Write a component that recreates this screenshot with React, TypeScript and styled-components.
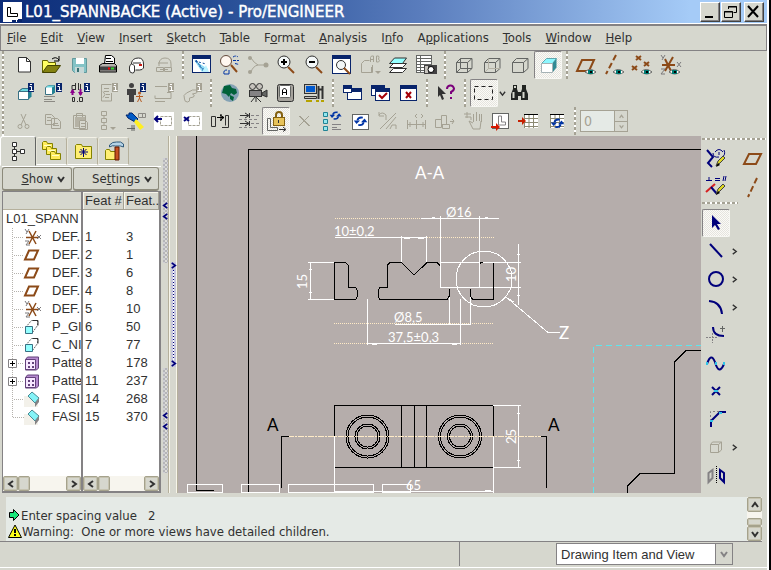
import React from "react";
import styled, { createGlobalStyle, css } from "styled-components";

const ui = '"DejaVu Sans Condensed", "DejaVu Sans", "Noto Sans", sans-serif';
const arial = '"Liberation Sans", Arial, sans-serif';
const cad = 'Lato, "Open Sans", sans-serif';
const face = "#d6d7ce";
const navy = "#00007b";
const brown = "#8c4a18";
const dis = "#a5a294";

const Global = createGlobalStyle`
  * { box-sizing: border-box; }
  html, body, #root { height: 100%; }
  body { margin: 0; background: #000; font-family: ${ui}; font-size: 13px; color: #313131; overflow: hidden; }
  button { font: inherit; color: inherit; background: none; border: 0; padding: 0; margin: 0; }
  svg { display: block; flex: none; }
`;

const Window = styled.div`
  display: flex;
  flex-direction: column;
  height: 100vh;
  margin-right: 2px;
  background: ${face};
  border-right: 2px solid #fff;
`;

/* ---------- title and menu ---------- */
const TitleBar = styled.header`
  display: flex;
  align-items: center;
  flex: none;
  height: 24px;
  padding: 0 3px 0 3px;
  background: linear-gradient(90deg, #0c2c78 0%, #1f4790 25%, #5a7dbd 55%, #a5cbf7 90%);
  color: #fff;
`;
const Title = styled.h1`
  flex: 1;
  margin: 0 0 0 3px;
  font: 400 15px/24px "DejaVu Sans", sans-serif;
  white-space: nowrap;
  -webkit-text-stroke: 0.4px #fff;
`;
const CaptionButton = styled.button<{ $gap?: boolean }>`
  width: 20px;
  height: 20px;
  margin-left: ${(p) => (p.$gap ? "3px" : "1px")};
  background: ${face};
  border: 1px solid;
  border-color: #fff #424242 #424242 #fff;
  box-shadow: inset -1px -1px #848284;
`;
const MenuBar = styled.nav`
  display: flex;
  align-items: center;
  flex: none;
  gap: 14px;
  height: 27px;
  padding: 0 6px;
  border: 1px solid #848284;
  border-top: 2px solid #848284;
  box-shadow: 0 -1px #fff;
`;
const MenuItem = styled.button`
  line-height: 20px;
  white-space: nowrap;
`;

/* ---------- toolbars ---------- */
const Toolbars = styled.div`
  display: flex;
  flex-direction: column;
  flex: none;
  height: 85px;
  padding-left: 9px;
  border-left: 1px solid ${face};
  background: repeating-linear-gradient(180deg, #a5a294 0 3px, #fff 3px 5px) 1px 0 / 2px 100% no-repeat;
`;
const Row = styled.div`
  display: flex;
  align-items: center;
  height: 28px;
`;
const pressed = css`
  background: conic-gradient(#e5e4de 25%, #fbfaf7 0 50%, #e5e4de 0 75%, #fbfaf7 0) 0 0 / 2px 2px;
  border-color: #848284 #f7f7f3 #f7f7f3 #848284;
`;
const ToolButton = styled.button<{ $on?: boolean }>`
  display: grid;
  place-items: center;
  flex: none;
  width: 28px;
  height: 28px;
  border: 1px solid transparent;
  border-radius: 2px;
  ${(p) => p.$on && pressed}
`;
const Handle = styled.div<{ $w?: string }>`
  flex: none;
  width: ${(p) => p.$w ?? "10px"};
  height: ${(p) => (p.$w ? "8px" : "28px")};
  background: ${(p) =>
    p.$w
      ? "repeating-linear-gradient(90deg, #a5a294 0 3px, #fff 3px 5px) 0 1px / 100% 2px no-repeat"
      : "repeating-linear-gradient(180deg, #a5a294 0 3px, #fff 3px 5px) 4px 0 / 2px 100% no-repeat"};
`;
const Chevron = styled.button`
  display: grid;
  place-items: center;
  flex: none;
  width: 8px;
  height: 24px;
`;
const SpinBox = styled.div`
  display: flex;
  align-items: stretch;
  width: 48px;
  height: 22px;
  border: 1px solid ${dis};
`;
const SpinInput = styled.input`
  flex: 1;
  min-width: 0;
  padding: 0 3px;
  border: 0;
  background: #e5eae6;
  color: ${dis};
  font: 14px ${ui};
`;
const SpinButtons = styled.div`
  display: grid;
  grid-template-rows: 1fr 1fr;
  width: 13px;
  border-left: 1px solid ${dis};
`;
const SpinButton = styled.button`
  display: grid;
  place-items: center;
  &:last-child { border-top: 1px solid ${dis}; }
`;

/* ---------- main area ---------- */
const Main = styled.main`
  display: flex;
  flex: 1;
  min-height: 0;
`;
const Side = styled.aside`
  display: flex;
  flex-direction: column;
  flex: none;
  width: 161px;
`;
const Tabs = styled.div`
  display: flex;
  flex: none;
  height: 30px;
`;
const Tab = styled.button<{ $on?: boolean }>`
  display: grid;
  place-items: center;
  width: ${(p) => (p.$on ? "36px" : "31px")};
  height: ${(p) => (p.$on ? "30px" : "28px")};
  align-self: flex-start;
  margin-top: ${(p) => (p.$on ? "0" : "1px")};
  border: 1px solid;
  border-color: ${(p) => (p.$on ? "#fff #636563 transparent #fff" : "#f3f1e6 #b5b09c #fff #e5e4d8")};
  border-radius: 3px 3px 0 0;
`;
const MenuButtons = styled.div`
  display: flex;
  gap: 1px;
  flex: none;
  height: 25px;
  margin-left: 2px;
  border-top: 1px solid #fff;
`;
const MenuButton = styled.button<{ $wide?: boolean }>`
  display: flex;
  align-items: center;
  justify-content: flex-end;
  gap: 4px;
  width: ${(p) => (p.$wide ? "86px" : "70px")};
  padding-right: 6px;
  border: 1px solid #8c8a7b;
  border-bottom-width: 2px;
  border-radius: 3px;
`;
const Panes = styled.div`
  display: flex;
  flex: 1;
  min-height: 0;
  margin-left: 2px;
  border: 1px solid #848284;
  border-right-width: 2px;
  border-bottom-width: 2px;
  background: #fff;
`;
const Pane = styled.section<{ $tree?: boolean }>`
  display: flex;
  flex-direction: column;
  flex: ${(p) => (p.$tree ? "0 0 80px" : "1")};
  min-width: 0;
  overflow: hidden;
  border-right: ${(p) => (p.$tree ? "2px solid #848284" : "0")};
  font: 13px/18px ${arial};
`;
const PaneHead = styled.div`
  flex: none;
  height: 18px;
  background: ${face};
  border-bottom: 1px solid #b5b09c;
`;
const TreeList = styled.ul`
  flex: 1;
  margin: 0;
  padding: 0;
  list-style: none;
  white-space: nowrap;
`;
const TreeItem = styled.li<{ $root?: boolean }>`
  display: flex;
  align-items: center;
  gap: 11px;
  height: 18px;
  padding-left: ${(p) => (p.$root ? "3px" : "4px")};
`;
const Table = styled.table`
  width: 100%;
  table-layout: fixed;
  border-collapse: collapse;
  th, td { height: 18px; padding: 0 0 0 2px; text-align: left; font-weight: 400; white-space: nowrap; }
  th { background: ${face}; box-shadow: inset -1px -1px #a5a294, inset 1px 1px #f7f5ea; }
`;
const TableWrap = styled.div`
  flex: 1;
  overflow: hidden;
`;
const ScrollBar = styled.div<{ $vertical?: boolean }>`
  display: flex;
  flex: none;
  flex-direction: ${(p) => (p.$vertical ? "column" : "row")};
  width: ${(p) => (p.$vertical ? "15px" : "auto")};
  height: ${(p) => (p.$vertical ? "auto" : "15px")};
  background: #f7f5ee;
`;
const ScrollPart = styled.button<{ $w: number; $h: number }>`
  display: grid;
  place-items: center;
  width: ${(p) => p.$w}px;
  height: ${(p) => p.$h}px;
  background: ${face};
  border: 1px solid #a5a28c;
  box-shadow: inset 0 0 0 1px #c6c3b0;
  border-radius: 2px;
`;
const Spacer = styled.div`
  flex: 1;
`;

const Splitter = styled.div`
  display: flex;
  flex: none;
  width: 17px;
`;
const SashA = styled.div`
  display: flex;
  flex-direction: column;
  justify-content: space-between;
  width: 7px;
  padding: 22px 0 20px 2px;
`;
const SashB = styled.div`
  display: flex;
  flex-direction: column;
  justify-content: center;
  width: 10px;
  padding: 0 1px 0 2px;
  border-left: 1px solid #b5b09c;
  border-right: 1px solid #b5b09c;
  box-shadow: inset 1px 0 #f7f5ea, inset -1px 0 #f7f5ea;
`;
const Grip = styled.button<{ $dots?: boolean }>`
  display: flex;
  flex-direction: column;
  align-items: center;
  justify-content: ${(p) => (p.$dots ? "space-between" : "center")};
  gap: 4px;
  width: 5px;
  height: 105px;
  background: ${(p) =>
    p.$dots
      ? `repeating-linear-gradient(180deg, ${navy} 0 1px, #fff 1px 3px) 2px 8px / 1px 90px no-repeat, #c6c6dc`
      : "conic-gradient(#b5b5b8 25%, #deded8 0 50%, #b5b5b8 0 75%, #cfcfd4 0) 0 0 / 4px 4px"};
`;

const Canvas = styled.section`
  flex: 1;
  min-width: 0;
  overflow: hidden;
  background: #b5adab;
  text { font-family: ${cad}; font-size: 13px; fill: #fff; }
`;

const RightBar = styled.aside`
  display: flex;
  flex-direction: column;
  flex: none;
  width: 66px;
  padding: 1px 0 0 1px;
`;
const RightRow = styled.div`
  display: flex;
  align-items: center;
  height: 28px;
`;
const RightGap = styled.div`
  width: 9px;
`;

/* ---------- bottom ---------- */
const Messages = styled.section`
  display: flex;
  flex: none;
  height: 45px;
  margin: 4px 5px 0 0;
  padding-left: 6px;
  border-bottom: 1px solid #848284;
`;
const MessageLog = styled.div`
  display: flex;
  flex-direction: column;
  flex: 1;
  padding: 10px 0 0 2px;
  background: #e5eae6;
`;
const Message = styled.p`
  display: flex;
  align-items: center;
  margin: 0;
  height: 16px;
  white-space: pre;
`;
const StatusBar = styled.footer`
  display: flex;
  align-items: center;
  flex: none;
  height: 28px;
  padding-bottom: 4px;
  background: linear-gradient(#fff, #fff) 0 25px / 100% 1px no-repeat;
`;
const StatusCell = styled.div`
  flex: 0 0 60%;
  height: 24px;
  border-right: 1px solid #848284;
`;
const FilterBox = styled.div`
  display: grid;
  grid-template-columns: 1fr 16px;
  width: 177px;
  height: 22px;
  margin: 0 34px 0 auto;
  border: 1px solid #848284;
  background: ${face};
  align-items: center;
  justify-items: center;
`;
const FilterSelect = styled.select`
  appearance: none;
  width: 100%;
  height: 20px;
  padding: 0 4px;
  border: 0;
  border-right: 1px solid #848284;
  border-radius: 0;
  background: #fff;
  color: #313131;
  font: 13px ${arial};
`;

/* ---------- drawing helpers ---------- */
type PProps = { d: string; c?: string; f?: string; w?: number; dash?: string };
const P = ({ d, c = "none", f = "none", w = 1, dash }: PProps) => (
  <path d={d} stroke={c} fill={f} strokeWidth={w} strokeDasharray={dash} />
);
const Svg = ({ s = 24, children }: { s?: number; children: React.ReactNode }) => (
  <svg width={s} height={s} viewBox={`0 0 ${s} ${s}`} aria-hidden="true">{children}</svg>
);
const Angle = ({ dir, c = "#313131", s = 8, w = 2 }: { dir: "l" | "r" | "u" | "d"; c?: string; s?: number; w?: number }) => {
  const d = { l: "M6 1L2 4L6 7", r: "M2 1L6 4L2 7", u: "M1 6L4 2L7 6", d: "M1 2L4 6L7 2" }[dir];
  return <svg width={s} height={s} viewBox="0 0 8 8" aria-hidden="true"><P d={d} c={c} w={w} /></svg>;
};
const Info = ({ c = "#08246b" }: { c?: string }) => (
  <g>
    <P d="M16 2h6v9h-6z" f={c} />
    <P d="M18 3.500h2M17.500 5.500h2v4M17.500 9.500h4" c="#fff" />
  </g>
);
const Eye = () => (
  <g>
    <P d="M11 19q5-5 11 0q-5 4-11 0z" f="#fff" c="#636563" />
    <P d="M14 17h5v4h-5z" f="#007b73" />
    <P d="M16 18h2v2h-2z" f="#000" />
  </g>
);
const Lens = ({ sign }: { sign?: string }) => (
  <g>
    <P d="M14 14l6 6" c={brown} w={2} />
    <circle cx="10" cy="9" r="6" fill="#f3f7f7" stroke="#313131" />
    {sign && <P d={sign} c="#000" w={2} />}
  </g>
);
const Swirl = ({ x = 0, y = 0, k = 1 }: { x?: number; y?: number; k?: number }) => (
  <g transform={`translate(${x} ${y}) scale(${k})`}>
    <P d="M6 6q1-4 6-3" c="#0034a5" w={2} />
    <P d="M2 6h7l-4 4z" f="#0034a5" />
    <P d="M13 8q-1 4-6 3" c="#0034a5" w={2} />
    <P d="M10 8h7l-3-4z" f="#0034a5" />
  </g>
);
const WireCube = ({ inner }: { inner?: React.ReactNode }) => (
  <g>
    <P d="M4.500 9.500h11v10h-11zM4.500 9.500l4-4h11.500v10l-4.500 4M15.500 9.500l4.500-4" c="#636563" />
    {inner}
  </g>
);
const Frame = ({ x = 2, y = 2, w = 19, h = 18 }: { x?: number; y?: number; w?: number; h?: number }) => (
  <g>
    <rect x={x + 0.5} y={y + 0.5} width={w - 1} height={h - 1} fill="#fff" stroke="#08246b" />
    <rect x={x} y={y} width={w} height={4} fill="#08246b" />
  </g>
);
const Folder = ({ x, y }: { x: number; y: number }) => (
  <g transform={`translate(${x} ${y})`}>
    <P d="M.5 8.500V1.500l1-1h3l1 2h5v6z" c="#848200" f="#ffeb5a" />
    <P d="M2 4.500h7" c="#ffffc6" />
  </g>
);
const MiniTable = ({ x = 7 }: { x?: number }) => (
  <g>
    <rect x={x} y={5} width={14} height={14} fill="#fff" />
    <P d={`M${x} 5.500h14M${x} 9.500h14M${x} 13.500h14M${x} 17.500h14M${x + 0.5} 5v14M${x + 5} 5v14M${x + 9.5} 5v14`} c="#8c8a73" />
    <P d={`M${x} 5.500h14`} c="#000" />
  </g>
);
const PlaneShape = ({ x = 0, y = 0 }: { x?: number; y?: number }) => (
  <P d={`M${7 + x} ${6 + y}h12l-5 11h-12z`} c={brown} w={2} />
);

/* ---------- toolbar icons ---------- */
const row1: React.ReactNode[] = [
  <><P d="M6.500 4.500h8l4 4v10.500h-12z" c="#313131" f="#fff" /><P d="M14.500 4.500v4h4" c="#313131" /></>,
  <><P d="M2.500 19.500v-12h5l1 2h7v4" c="#636300" f="#ffff63" /><P d="M2.500 19.500l5-7h13l-5 7z" c="#424200" f="#848210" /><P d="M12 6q4-3 7 1M19 3v5h-5" c="#000" /></>,
  <><P d="M4.500 5.500h14v14h-12l-2-2z" c="#63999c" f="#84c3c6" /><rect x="8" y="5" width="8" height="6" fill="#fff" /><rect x="7" y="14" width="9" height="6" fill="#c6d7d6" /><rect x="9" y="15" width="2" height="4" fill="#397173" /></>,
  <><P d="M8.500 11l1-8.500h6l3 2.500v7" c="#000" f="#fff" /><P d="M10 5.500h5M10 8.500h7" c="#000" /><P d="M3.500 12.500l3-2h12l2 2v6.500h-17z" c="#000" f="#b5b2ad" /><P d="M4 13.500h16v4h-16z" f="#424142" /><P d="M12 15.500h2" c="#f00" w={2} /><P d="M15 15.500h3" c="#31d731" w={2} /></>,
  <><P d="M7.500 16v-6q1-5 7-5q5 0 5 6v4q-1 2-4 2h-4" c="#313131" f="#fff" /><P d="M5.500 18v-4q0-2 2-3q2 0 3 2v5q0 2-2 2q-3 0-3-3zM9 10h8" c="#313131" f="#fff" /><P d="M15 11h3v2h-3z" f="#c61810" /></>,
  <><P d="M7 13v-3q1-5 6-5q6 0 6 6v3M6 10h10" c={dis} /><P d="M4.500 14.500h7v4h-7zM12.500 14.500h7v4h-7zM8 16.500h8" c={dis} /></>,
  "|",
  <><Frame /><P d="M4 7l14 9v3h-6z" f="#94dff7" /><P d="M5 8l11 3M6 7l8 12M6 9h2M9 13h2M12 16h2" c="#084a9c" dash="2 2" /><P d="M16 12l3 7h-7z" f="#bdf3ff" /></>,
  <><P d="M13 12l6 7" c={brown} w={2} /><circle cx="8" cy="8" r="5.500" fill="#fff7f0" stroke="#63493a" /><P d="M15 4q3-2 5 0M15 7.500h6M17 10.500l4 1" c="#0034a5" dash="3 1" /><P d="M6 21q-1-4 3-4M6 21h5v-4" c="#0034a5" /></>,
  <><P d="M5 5q3 5 7 7h7M5 19q2-6 7-7" c={dis} /><circle cx="4" cy="5" r="2" fill={dis} /><circle cx="4" cy="19" r="2" fill={dis} /><circle cx="20" cy="12" r="2.500" fill={dis} /></>,
  <Lens sign="M7 9h6M10 6v6" />,
  <Lens sign="M7 9h6" />,
  <><Frame h={19} /><circle cx="11" cy="12" r="4.500" fill="#f3f7f7" stroke="#313131" /><P d="M14 15l6 6" c={brown} w={2} /></>,
  <><P d="M3.500 19.500v-9l3-3h5M14.500 12v7.500h-11M13.500 14v6" c={dis} /><P d="M12.500 9V4.500l1-1.500h2v6M13 6.500h2M18.500 3v6h2q2-1 0-3q1-2 0-3z" c={dis} /><P d="M17 18h6l-3 3z" f={dis} /></>,
  <><P d="M3.500 19.500l4-4h13l-4 4z" c="#313131" f="#fff" /><P d="M3.500 14.500l4-4h13l-4 4z" c="#313131" f="#fff" /><P d="M3.500 10.500l5-5.500h12l-4 5.500z" c="#313131" f="#94ffff" /></>,
  <><rect x="2.500" y="2.500" width="15" height="17" fill="#fff" stroke="#636563" /><P d="M3 5.500h14M3 8.500h14M3 11.500h14M3 14.500h7M3 17.500h7M6.500 3v16" c="#636563" /><rect x="10" y="12" width="13" height="9" fill="#424142" /><rect x="11" y="13" width="3" height="7" fill="#c6c3bd" /><circle cx="17" cy="16.500" r="3" fill="#fff" stroke="#000" /></>,
  "|",
  <WireCube inner={<P d="M8.500 5.500v10h11.500M8.500 15.500l-4 4" c="#636563" />} />,
  <WireCube inner={<P d="M8.500 5.500v10h11.500M8.500 15.500l-4 4" c="#b5b2a5" />} />,
  <WireCube />,
  <><P d="M5.500 10.500l5-5h10l-4 5z" f="#8cf7ff" c="#63a6ad" /><P d="M16.500 10.500l4-5v9l-4 5z" f="#318a94" /><P d="M5.500 10.500h11v9h-11z" f="#fff" c="#a5b2b5" /></>,
  "|",
  <><PlaneShape x={1} y={1} /><Eye /></>,
  <><P d="M14 2L4 21" c={brown} w={2} dash="6 3" /><Eye /></>,
  <><P d="M6 3l5 4M11 3l-5 4M14 9l5 4M19 9l-5 4M2 13l5 4M7 13l-5 4" c={brown} w={2} /><Eye /></>,
  <><P d="M4 12h13M15 4l-8 14M7 6l6 12" c={brown} w={2} /><P d="M3 2l2 3M7 2l-3 5M19 9l4 5M23 9l-4 5M3 16h4l-4 5h4" c="#7b797b" /><Eye /></>,
];

const row2: React.ReactNode[] = [
  <><P d="M6.500 10.500l4-3h9l-3 3v8h-10z" c="#397184" f="#fff" /><P d="M6.500 10.500l4-3h9l-3 3z" f="#6bd7de" c="#397184" /><P d="M16.500 10.500l3-3v8l-3 3z" f="#218294" /><Info /></>,
  <><P d="M5.500 6.500l3-2h6v7l-3 2h-6z" c="#397184" f="#fff" /><P d="M5.500 6.500l3-2h6l-2 2z" f="#6bd7de" /><P d="M12 6.500l3-2v7l-3 2z" f="#218294" /><P d="M4 15.500h11M4 18.500h8M4 20.500h11" c="#8c8a84" /><Info /></>,
  <><P d="M7.500 2v7M7 4.500h-3v4h4M10.500 2v7M12.500 3v6" c="#313131" /><P d="M4.500 14v-5M12.500 8v6" c="#8c008c" w={2} /><P d="M2 12h5l-2.500-4zM10 11h5l-2.500 4z" f="#8c008c" /><P d="M4.500 16.500h2v4h-2zM9 20.500h1M11.500 16.500h3v4h-3z" c="#313131" /><Info /></>,
  <><P d="M5.500 3.500h10M15.500 12v8h-10v-16.500M8 7.500h5M8 10.500h5M10 13.500h4M9 16.500h4M7 10.500l2 3l-2 3" c={dis} /><Info c={dis} /></>,
  <><circle cx="7.500" cy="4.500" r="2.500" fill="#424142" /><P d="M3 8h9v6h-2v7h-5v-7h-2z" f="#424142" /><circle cx="15.500" cy="12" r="1.500" fill="#b55a21" /><P d="M12 15.500h7M15.500 14v3l-2 4M15.500 17l2 4" c="#b55a21" /><Info /></>,
  <><P d="M3 5.500h12M15 11.500h4v6h-16v-3M3 20.500h10" c={dis} /><Info c={dis} /></>,
  <><P d="M4.500 18q-2-4 2-6l6-3h4q2 1 0 3l-4 1q3 1 1 3l-4 1q1 4-2 4q-3 0-3-3z" c={dis} /><Info c={dis} /></>,
  "|",
  <><circle cx="12" cy="12" r="9" fill="#84a2b5" /><P d="M6 5l6-1l2 3l4 1l1 4l-3 2l-3-2l-2 4l-3-3l-4-1z" f="#00613a" /><P d="M12 14l4 2l-1 4l-3-2z" f="#00613a" /></>,
  <><circle cx="6.500" cy="5.500" r="3" fill="#c6c3bd" stroke="#313131" /><circle cx="13.500" cy="5.500" r="3" fill="#c6c3bd" stroke="#313131" /><rect x="3.500" y="9.500" width="12" height="6" fill="#848284" stroke="#313131" /><P d="M16 12l5-3v7l-5-2z" f="#636563" c="#313131" /><P d="M9 16l-4 5M10 16l5 5M10 16v5" c="#313131" /></>,
  <><rect x="3.500" y="3.500" width="16" height="17" rx="2" fill="#a5a29c" stroke="#313131" /><rect x="5.500" y="4.500" width="11" height="12" rx="1" fill="#fff" stroke="#636563" /><P d="M8.500 14V9l2-2l2 2v5M9 11.500h3" c="#000" /></>,
  <><rect x="2.500" y="3.500" width="12" height="9" fill="#c6c3bd" stroke="#313131" /><rect x="4" y="5" width="9" height="6" fill="#0059ce" /><P d="M2.500 15.500h12v2h-12z" c="#313131" f="#c6c3bd" /><P d="M16.500 5v13M20.500 5v13M16 8.500h4" c="#313131" w={2} /><P d="M4 20h6M14 20h3M19 20h3" c="#b5a200" w={2} /></>,
  "|",
  <><Frame x={7} y={7} w={15} h={12} /><Frame x={3} y={4} w={9} h={8} /></>,
  <><Frame x={3} y={4} w={14} h={11} /><Frame x={7} y={7} w={15} h={13} /><P d="M11 14l3 3l5-5" c="#a50008" w={2} /></>,
  <><Frame x={4} y={4} w={17} h={16} /><P d="M10 11l5 6M15 11l-5 6" c="#a50008" w={2} /></>,
  "|",
  <><P d="M4 5l8 8h-4l2 5l-2 1l-2-5l-2 2z" f="#313131" /><P d="M13 8q0-3 3-3.500t4 3q0 2-3 3.500v2M17 16v2" c="#7b007b" w={2} /></>,
  "|",
  <P d="M2.500 5.500h18v13h-18z" c="#212021" dash="4 3" />,
  "v",
  <><P d="M5 4h4v4l1 3h3l1-3v-4h4v4l2 5v6h-7v-4h-3v4h-7v-6l2-5z" f="#212421" /><P d="M5.500 11v6M15.500 11v6M7 5v2" c="#d6d7ce" w={2} /></>,
];

const Ghost = ({ d }: { d: string }) => <P d={d} c={dis} />;
const row3: React.ReactNode[] = [
  <><Ghost d="M9 5l5 11M14 5l-5 11" /><circle cx="8" cy="17.500" r="2" fill="none" stroke={dis} /><circle cx="15" cy="17.500" r="2" fill="none" stroke={dis} /></>,
  <Ghost d="M5.500 5.500h6l3 3v7h-9zM7 8.500h4M7 11.500h5M11.500 9.500h6l3 3v7h-9zM13 14.500h5M13 16.500h6" />,
  <><Ghost d="M5.500 6.500h12v13h-12zM8.500 4.500h6v4h-6zM11.500 11.500h6l2 2v7h-8zM13 14.500h5M13 17.500h5" /><P d="M7 8h10v3h-6v7h-4z" f="#b5b2a5" /></>,
  <><Ghost d="M5.500 2.500h5v4h-5zM5.500 9.500h5v4h-5zM5.500 16.500h5v4h-5zM8 6v3M8 13v3" /><P d="M14 18h6l-3 3z" f={dis} /></>,
  <><P d="M2 6h3v-2h3l6 6l-3 3l-7-4z" f="#005ac6" c="#00246b" /><P d="M12 10l8 8l-4 3l-6-8z" f="#ffef21" /><P d="M3 19.500h8M8 16v6M10 16v6" c="#636563" /><P d="M14.500 4.500h7v4h-7zM18.500 5v4" c="#8c8a84" /></>,
  <><rect x="2" y="3" width="20" height="18" fill="#fff" /><P d="M8.500 7.500h11v9h-11z" c={dis} dash="3 1" /><P d="M3 10h7M6 7l-3 3l3 3" c="#00007b" w={2} /></>,
  <><rect x="2" y="3" width="20" height="18" fill="#fff" /><P d="M8.500 7.500h11v9h-11z" c={dis} dash="3 1" /><P d="M4 8l5 4M9 8l-5 4" c="#00007b" w={2} /></>,
  <><P d="M3.500 7.500h4v10h-4zM14 18.500h6.500v-12h-3v10" c="#313131" /><P d="M9 8.500h7M13 5v7M12 6l4 2.500l-4 3" c="#000" /></>,
  <><P d="M4 6.500h8M9 4l4 2.500l-4 2.500M13.500 4v5M4 14.500h8M9 12l4 2.500l-4 2.500M13.500 12v5" c="#313131" /><P d="M15 6.500h8M3 10.500h20M15 14.500h8M3 18.500h20" c="#848284" dash="3 2" /></>,
  <><P d="M3.500 9.500h3v9h7v3h-10z" c="#636563" /><P d="M12 9V6q0-3 3-3t3 3v3" c="#846110" w={2} /><rect x="9.500" y="8.500" width="11" height="8" fill="#e7c35a" stroke="#846110" /><P d="M14.500 11v3M15 20.500h6M19 18l3 2.500l-3 2" c="#313131" /></>,
  <Ghost d="M7 7l10 10M17 7l-10 10M8 7l10 10" />,
  <><P d="M3.500 3.500h4v4h-4zM3.500 10.500h4v4h-4zM3.500 17.500h4v4h-4z" c="#218294" f="#94e7ef" /><Swirl x={8} y={1} k={0.8} /><P d="M12 15.500h9M12 18.500h5M12 20.500h9" c="#848284" /></>,
  <><rect x="4.500" y="5.500" width="16" height="15" fill="#fff" stroke="#636563" /><Swirl x={4} y={6} k={0.9} /></>,
  <Ghost d="M3 6q3-4 7 0v5M3 3v4h5M4 20L20 4M10 20L20 8M14 20l2-4h4v4" />,
  <Ghost d="M3.500 11v9M12.500 11v9M21.500 11v9M4 15.500h17M13 5l-2 2l2 2M17 5l2 2l-2 2M6 13v5M19 13v5" />,
  <Ghost d="M3.500 10.500h6v8h-6zM10.500 15.500h7v4h-7zM9.500 6.500h5v9h-5zM18 12.500h4M20 10l2 2l-2 3" />,
  <Ghost d="M4 5h7M5 8h6v3M7 3v6M13.500 5v8M16.500 3v9M19.500 5v7M9 12l4 8h7l1-8M9 12l4 2M21.500 5v8" />,
  <><rect x="4.500" y="4.500" width="16" height="15" fill="#fff" stroke="#636563" /><P d="M10.500 7v9h7v-3h-4v-6z" c="#848284" /><P d="M3 17h5v-3l4 4l-4 4v-3h-5z" f="#d61800" /></>,
  <><MiniTable x={8} /><P d="M2 11h4v-3l4 4l-4 4v-3h-4z" f="#c62000" /></>,
  <><MiniTable x={6} /><Swirl x={5} y={8} k={0.9} /></>,
];

const rightIcons: Array<{ el: React.ReactNode; more?: boolean; on?: boolean; name: string }> = [
  { name: "Select", on: true, el: <P d="M8 4l9 9h-4l3 5l-2 1l-3-5l-3 3z" f={navy} /> },
  { name: "Line", more: true, el: <P d="M6 5l12 13" c={navy} w={2} /> },
  { name: "Circle", more: true, el: <circle cx="12" cy="12" r="7" fill="none" stroke={navy} strokeWidth="2" /> },
  { name: "Arc", more: true, el: <P d="M5 6q12 1 13 13" c={navy} w={2} /> },
  { name: "Fillet", el: <><P d="M9 4q0 9 11 9" c={navy} w={2} /><P d="M2 14.500h12M8.500 10v10" c="#848284" dash="2 1" /><P d="M18.500 3v6M16 5.500h5" c="#636563" /></> },
  { name: "Spline", el: <><P d="M3 13q4-12 8-2q4 14 9 2" c={navy} w={2} /><P d="M3 11v3M12 11v3M20 11v3" c="#31c3e7" w={2} /></> },
  { name: "Point", el: <><P d="M8 8l8 8M16 8l-8 8" c={navy} w={2} /><P d="M10 12h4" c="#31c3e7" w={2} /></> },
  { name: "Chamfer", el: <><P d="M6.500 14V4.500h12" c="#848284" dash="2 2" /><P d="M7 20v-6l9-9h6" c={navy} w={2} /><P d="M6 14h3M15 6h3" c="#31c3e7" w={2} /></> },
  { name: "Use edge", more: true, el: <P d="M6.500 9.500h8v8h-8zM6.500 9.500l2-2.500h9v8l-3 2.500M14.500 9.500l3-2.500" c={dis} /> },
  { name: "Mirror", el: <><P d="M4.500 10l4-3v8l-4 4z" c="#848284" w={2} /><P d="M12.500 3v18" c="#000" dash="1 1" /><P d="M16 7l4 3v9l-4-4z" c={navy} w={2} /></> },
];

const SketchIcon = ({ top }: { top: React.ReactNode }) => (
  <>
    {top}
    <P d="M12 19l2-5l5-5l2 2l-5 5z" f="#ded721" c="#424142" />
    <P d="M12 20l2-4l2 2z" f="#000" />
  </>
);

const menus = [
  ["", "F", "ile"], ["", "E", "dit"], ["", "V", "iew"], ["", "I", "nsert"], ["", "S", "ketch"], ["", "T", "able"],
  ["F", "o", "rmat"], ["", "A", "nalysis"], ["I", "n", "fo"], ["A", "p", "plications"], ["", "T", "ools"],
  ["", "W", "indow"], ["", "H", "elp"],
];

type Kind = "csys" | "plane" | "extrude" | "pattern" | "chamfer";
const tree: Array<[Kind, string, number, number]> = [
  ["csys", "DEF.", 1, 3], ["plane", "DEF.", 2, 1], ["plane", "DEF.", 3, 6], ["plane", "DEF.", 4, 8],
  ["csys", "DEF.", 5, 10], ["extrude", "P_GI", 6, 50], ["extrude", "C_NI", 7, 77],
  ["pattern", "Patte", 8, 178], ["pattern", "Patte", 11, 237], ["chamfer", "FASI", 14, 268], ["chamfer", "FASI", 15, 370],
];

const TreeGlyph = ({ kind, last }: { kind: Kind; last: boolean }) => (
  <svg width="34" height="18" viewBox="0 0 34 18" aria-hidden="true">
    <P d={last ? "M5.500 0v9.500h12" : "M5.500 0v18M7 9.500h10"} c="#b5b2ad" dash="1 1" />
    {kind === "csys" && <g transform="translate(15 -2)"><P d="M4 11.500h13M7 5l7 13M14 5l-7 13" c={brown} w={1.5} /><P d="M3 3l2 3M7 3l-3 5M15 9l4 4M19 9l-4 4M3 15h4l-3 4h4" c="#7b797b" /></g>}
    {kind === "plane" && <P d="M22 4.500h9l-4 9h-9z" c={brown} w={2} />}
    {kind === "extrude" && <><P d="M18.500 9.500l6-7h6v5l-5 7" c="#636563" dash="2 1" /><P d="M26 2.500h5v5" c="#313131" /><P d="M18.500 8.500h7v7h-7z" c="#397184" f="#94ffff" /></>}
    {kind === "pattern" && <>
      <P d="M1.500 5.500h8v8h-8z" c="#848284" f="#fff" /><P d="M3 9.500h5M5.500 7v5" c="#000" />
      <P d="M18.500 5.500l2-2.500h11v11l-2 2h-11z" c="#63417b" f="#b58ace" /><P d="M18.500 5.500h10v10h-10z" c="#63417b" f="#f7e7ff" />
      <P d="M21 9h2M25 9h2M21 13h2M25 13h2" c="#63417b" w={2} />
    </>}
    {kind === "chamfer" && <><P d="M17 6h8l6 6v5h-14z" f="#f3f1ea" /><P d="M21 6l4-4l7 6l-4 5z" f="#84f3f7" c="#4a8a94" /><P d="M28 13l4-5v4l-4 5z" f="#848284" /></>}
  </svg>
);

const Drawing = () => (
  <svg width="523" height="357" viewBox="178 136 523 357" role="img" aria-label="Drawing sheet" shapeRendering="crispEdges">
    <P d="M196.500 136v354.500h17M248.500 493V149.500H701" c="#000" />
    <P d="M187.500 484.500h35v8h-35zM241.500 484.500h38v8h-38zM288.500 484.500h85v8h-85zM382.500 484.500h28v8h-28z" c="#fff" />
    <P d="M335 218.500h86M427 237.500h67M334 323.500h160M334 343.500h160" c="#ffebc6" dash="1 1" />
    <P d="M421 218.500h78M335 237.500h92M401.500 236v27M426.500 236v27M308 262.500h26M308 299.500h26M310.500 262v37M440.500 216v71M479.500 216v72M440 262.500h81M440 287.500h81M518.500 244v61M395 324.500h75M449.500 297v28M470.500 297v28M460.500 299v46M367.500 299v46M367 343.500h93" c="#fff" />
    <P d="M309 269.500h3M309 292.500h3M404 238.500h6M418 238.500h6M432 217.500h3M485 217.500h3M517 254.500h3M517 295.500h3M372 344.500h5M452 344.500h5" c="#fff" />
    <circle cx="484" cy="279" r="28" fill="none" stroke="#fff" />
    <P d="M506 297L548 332.500h12M507 298l7 4" c="#fff" />
    <P d="M334.500 299.500v-37h11l3 3v22h7l2 3v6l-2 3zM401 262.500h-11l-3 3v22h-7l-2 3v6l2 3h67l2-3v-8M401 262L414 275L427 262.500h10l3 3M471 289l-1 2v5l3 3.500h20v-37M480.500 264v-2h2" c="#000" />
    <P d="M334.500 436V405.500H493.500V467.500H334.500M401.500 405v62M414.500 405v62M426.500 405v62" c="#000" />
    <P d="M334.500 436v57M493.500 436v57M334 491.500h159M493 405.500h28M493 467.500h28M518.500 405v62M517 413.500h3M517 460.500h3M485 490.500h6" c="#fff" />
    {[367.5, 460].map((x) => (
      <g key={x} fill="none" stroke="#000">
        {[21.5, 19.5, 12.5, 10.5].map((r) => <circle key={r} cx={x} cy="436.500" r={r} />)}
      </g>
    ))}
    <P d="M288 436.500h254" c="#ffebc6" dash="6 1 2 1" />
    <P d="M281.500 488V436.500h7M541 436.500h5.500V488" c="#000" />
    <P d="M593.500 493V345.500H701" c="#5ae7ef" dash="6 4" />
    <P d="M701 350.500h-15l-12 12v111h-34l-13 13v7" c="#000" />
    <text x="415" y="179" style={{ fontSize: 17 }}>A-A</text>
    <text x="446" y="217">Ø16</text>
    <text x="334" y="236">10±0,2</text>
    <text x="394" y="322">Ø8,5</text>
    <text x="388" y="342">37,5±0,3</text>
    <text x="406" y="490">65</text>
    <text x="559" y="339" style={{ fontSize: 17 }}>Z</text>
    <text transform="translate(307 289) rotate(-90)">15</text>
    <text transform="translate(516 282) rotate(-90)">10</text>
    <text transform="translate(516 444) rotate(-90)">25</text>
    <text x="267" y="431" style={{ fontSize: 17, fill: "#000" }}>A</text>
    <text x="548" y="431" style={{ fontSize: 17, fill: "#000" }}>A</text>
  </svg>
);

const ToolRow = ({ items, on }: { items: React.ReactNode[]; on?: number }) => (
  <>
    {items.map((it, i) =>
      it === "|" ? <Handle key={i} /> :
      it === "v" ? <Chevron key={i} aria-label="More"><Angle dir="d" s={7} w={1.5} /></Chevron> :
      <ToolButton key={i} $on={i === on} aria-label={`Tool ${i + 1}`}><Svg>{it}</Svg></ToolButton>
    )}
  </>
);

const HScroll = () => (
  <ScrollBar>
    <ScrollPart $w={15} $h={15} aria-label="Scroll left"><Angle dir="l" /></ScrollPart>
    <ScrollPart $w={12} $h={15} aria-label="Scroll thumb" />
    <Spacer />
    <ScrollPart $w={15} $h={15} aria-label="Scroll right"><Angle dir="r" /></ScrollPart>
  </ScrollBar>
);

export default function App() {
  return (
    <>
      <Global />
      <Window>
        <TitleBar>
          <svg width="19" height="20" viewBox="0 0 19 20" aria-hidden="true">
            <rect width="19" height="20" fill="#fff" />
            <P d="M4.500 5.500h3v6h7v3h-10z" c="#000" w={1} />
            <P d="M9 17h10v3h-10z" f="#08246b" /><P d="M13.500 17v3M9 17.500h6" c="#fff" />
          </svg>
          <Title>L01_SPANNBACKE (Active) - Pro/ENGINEER</Title>
          <CaptionButton aria-label="Minimize"><svg width="18" height="18" viewBox="0 0 18 18"><P d="M4 14h8" c="#000" w={2} /></svg></CaptionButton>
          <CaptionButton aria-label="Restore"><svg width="18" height="18" viewBox="0 0 18 18"><P d="M6.500 6V3.500h8v6h-3M6 4h9M2.500 8.500h8v6h-8zM2 9h9" c="#000" /></svg></CaptionButton>
          <CaptionButton $gap aria-label="Close"><svg width="18" height="18" viewBox="0 0 18 18"><P d="M3 3l10 11M13 3L3 14" c="#000" w={2} /></svg></CaptionButton>
        </TitleBar>
        <MenuBar>
          {menus.map(([a, b, c]) => <MenuItem key={a + b + c}>{a}<u>{b}</u>{c}</MenuItem>)}
        </MenuBar>
        <Toolbars>
          <Row><ToolRow items={row1} on={20} /></Row>
          <Row><ToolRow items={row2} on={19} /></Row>
          <Row>
            <ToolRow items={row3} on={9} />
            <Handle />
            <SpinBox>
              <SpinInput aria-label="Value" defaultValue="0" disabled />
              <SpinButtons>
                <SpinButton aria-label="Increase"><Angle dir="u" s={5} c={dis} /></SpinButton>
                <SpinButton aria-label="Decrease"><Angle dir="d" s={5} c={dis} /></SpinButton>
              </SpinButtons>
            </SpinBox>
          </Row>
        </Toolbars>

        <Main>
          <Side>
            <Tabs>
              <Tab $on aria-label="Model tree"><Svg><P d="M6.500 3.500h4v4h-4zM6.500 10.500h4v4h-4zM6.500 17.500h4v4h-4zM14.500 10.500h4v4h-4z" c="#313131" f="#fff" /><P d="M8.500 8v2M8.500 15v2M11 12.500h3" c="#313131" /></Svg></Tab>
              <Tab aria-label="Folders"><Svg><Folder x={2} y={2} /><Folder x={6} y={7} /><Folder x={10} y={12} /></Svg></Tab>
              <Tab aria-label="Favorites"><Svg><P d="M4.500 19.500V6.500l1-1h5l1 2h9v12z" c="#848200" f="#ffef73" /><P d="M8 13h9M12.500 9v9M9.500 10l6 6M15.500 10l-6 6" c={navy} /></Svg></Tab>
              <Tab aria-label="Connections"><Svg><P d="M3.500 20.500V11.500l1-1h3l1 2h8v8z" c="#848200" f="#ffef73" /><P d="M7.500 6q3-3.500 7-3h4l3 2v3l-3-1h-5q-3-1-6 1z" c="#315a7b" f="#b5d3e7" /><P d="M13 8h4v13h-4z" c="#631800" f="#c65121" /></Svg></Tab>
            </Tabs>
            <MenuButtons>
              <MenuButton><span><u>S</u>how</span><Angle dir="d" /></MenuButton>
              <MenuButton $wide><span>Se<u>t</u>tings</span><Angle dir="d" /></MenuButton>
            </MenuButtons>
            <Panes>
              <Pane $tree>
                <PaneHead />
                <TreeList>
                  <TreeItem $root>L01_SPANN</TreeItem>
                  {tree.map(([kind, label], i) => (
                    <TreeItem key={i}><TreeGlyph kind={kind} last={i === tree.length - 1} />{label}</TreeItem>
                  ))}
                </TreeList>
                <HScroll />
              </Pane>
              <Pane>
                <TableWrap>
                  <Table>
                    <colgroup><col width="41" /><col /></colgroup>
                    <thead><tr><th>Feat #</th><th>Feat..</th></tr></thead>
                    <tbody>
                      <tr><td /><td /></tr>
                      {tree.map(([, , a, b], i) => <tr key={i}><td>{a}</td><td>{b}</td></tr>)}
                    </tbody>
                  </Table>
                </TableWrap>
                <HScroll />
              </Pane>
            </Panes>
          </Side>

          <Splitter>
            <SashA>
              <Grip aria-label="Collapse tree"><Angle dir="l" c={navy} s={7} /><Angle dir="l" c={navy} s={7} /></Grip>
              <Grip aria-label="Collapse panel"><Angle dir="l" c={navy} s={7} /><Angle dir="l" c={navy} s={7} /></Grip>
            </SashA>
            <SashB>
              <Grip $dots aria-label="Expand panel"><Angle dir="r" c={navy} s={7} /><Angle dir="r" c={navy} s={7} /></Grip>
            </SashB>
          </Splitter>

          <Canvas><Drawing /></Canvas>

          <RightBar>
            <Handle $w="64px" />
            <RightRow>
              <ToolButton aria-label="Sketch references"><Svg><SketchIcon top={<><P d="M3 3l6 7l-5 6l4 4" c={navy} w={2} /><P d="M11 5q4-5 8 0M9 6q0 5 6 4M20 3q2 5-2 7M15 5v3" c={navy} /></>} /></Svg></ToolButton>
              <RightGap />
              <ToolButton aria-label="Plane"><Svg><P d="M8 7h12l-5 10h-12z" c={brown} w={2} /></Svg></ToolButton>
            </RightRow>
            <RightRow>
              <ToolButton aria-label="Constraints"><Svg><SketchIcon top={<><P d="M2 5.500h6M5 2v4M11 3.500h5M11 5.500h5M19 6l1-5M21 6l1-5" c={navy} /><P d="M2 17L11 9" c="#d62021" w={2} /><P d="M7 12l6 7" c={navy} w={2} /></>} /></Svg></ToolButton>
              <RightGap />
              <ToolButton aria-label="Axis"><Svg><P d="M16 3L7 22" c={brown} w={2} dash="6 3" /></Svg></ToolButton>
            </RightRow>
            <Handle $w="36px" />
            {rightIcons.map((r) => (
              <RightRow key={r.name}>
                <ToolButton $on={r.on} aria-label={r.name}><Svg>{r.el}</Svg></ToolButton>
                {r.more && <Chevron aria-label={`${r.name} options`}><Angle dir="r" s={7} w={1.5} /></Chevron>}
              </RightRow>
            ))}
          </RightBar>
        </Main>

        <Messages>
          <MessageLog role="log">
            <Message><svg width="13" height="14" viewBox="0 0 13 14"><P d="M1.500 4.500h4v-3l5.500 5.500l-5.500 5.500v-3h-4z" c="#000" f="#18e77b" /></svg>{"Enter spacing value   2"}</Message>
            <Message><svg width="14" height="14" viewBox="0 0 14 14"><P d="M7 1L13.500 13.500H.5z" c="#000" f="#ffff18" /><P d="M7 5v4M7 10v2" c="#000" w={2} /></svg>{"Warning:  One or more views have detailed children."}</Message>
          </MessageLog>
          <ScrollBar $vertical>
            <ScrollPart $w={15} $h={15} aria-label="Scroll up"><Angle dir="u" /></ScrollPart>
            <Spacer />
            <ScrollPart $w={15} $h={8} aria-label="Scroll thumb" />
            <ScrollPart $w={15} $h={15} aria-label="Scroll down"><Angle dir="d" /></ScrollPart>
          </ScrollBar>
        </Messages>
        <StatusBar>
          <StatusCell />
          <FilterBox>
            <FilterSelect aria-label="Selection filter" defaultValue="d"><option value="d">Drawing Item and View</option></FilterSelect>
            <Angle dir="d" c="#848284" />
          </FilterBox>
        </StatusBar>
      </Window>
    </>
  );
}
